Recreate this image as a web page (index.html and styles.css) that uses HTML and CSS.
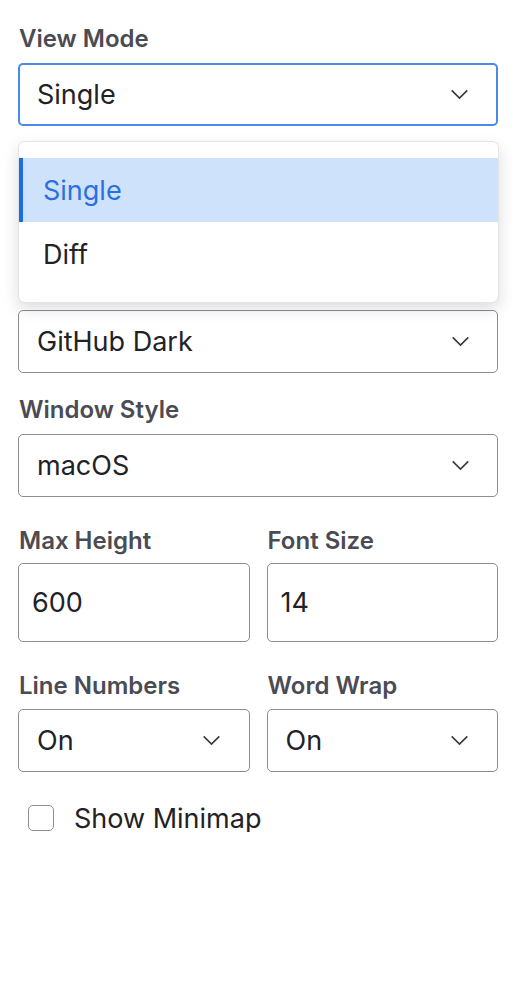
FILE: index.html
```html
<!DOCTYPE html>
<html lang="en">
<head>
  <meta charset="UTF-8">
  <title>Editor Settings</title>
  <link rel="stylesheet" href="styles.css">
</head>
<body>
  <div class="panel">
    <div class="field field-open">
      <div class="field-label">View Mode</div>
      <div class="select-wrap">
        <div class="select is-focused">
          <span>Single</span>
          <svg class="chevron" viewBox="0 0 20 12"><path d="M1.5 1.5 L10 10 L18.5 1.5"/></svg>
        </div>
        <ul class="menu">
          <li class="menu-item is-active">Single</li>
          <li class="menu-item">Diff</li>
        </ul>
      </div>
    </div>

    <div class="field">
      <div class="select">
        <span>GitHub Dark</span>
        <svg class="chevron" viewBox="0 0 20 12"><path d="M1.5 1.5 L10 10 L18.5 1.5"/></svg>
      </div>
    </div>

    <div class="field">
      <div class="field-label">Window Style</div>
      <div class="select">
        <span>macOS</span>
        <svg class="chevron" viewBox="0 0 20 12"><path d="M1.5 1.5 L10 10 L18.5 1.5"/></svg>
      </div>
    </div>

    <div class="field-row row-inputs">
      <div class="field">
        <div class="field-label">Max Height</div>
        <input class="text-input" type="text" value="600">
      </div>
      <div class="field">
        <div class="field-label">Font Size</div>
        <input class="text-input" type="text" value="14">
      </div>
    </div>

    <div class="field-row row-selects">
      <div class="field">
        <div class="field-label">Line Numbers</div>
        <div class="select">
          <span>On</span>
          <svg class="chevron" viewBox="0 0 20 12"><path d="M1.5 1.5 L10 10 L18.5 1.5"/></svg>
        </div>
      </div>
      <div class="field">
        <div class="field-label">Word Wrap</div>
        <div class="select">
          <span>On</span>
          <svg class="chevron" viewBox="0 0 20 12"><path d="M1.5 1.5 L10 10 L18.5 1.5"/></svg>
        </div>
      </div>
    </div>

    <label class="check">
      <span class="check-box"></span>
      <span class="check-text">Show Minimap</span>
    </label>
  </div>
</body>
</html>
```

FILE: styles.css
```css
body {
  margin: 0;
  background: #ffffff;
  font-family: Inter, "Noto Sans", sans-serif;
  color: #222226;
}

.panel {
  width: 480px;
  padding: 24px 0 0 18px;
}

.field {
  margin-bottom: 22px;
}

/* the open list sits over the space below the first select */
.field-open {
  margin-bottom: 184px;
}

.field-label {
  font-size: 24px;
  line-height: 29px;
  font-weight: 600;
  color: #4b4b53;
  margin-bottom: 10px;
  padding-left: 1px;
}

.select-wrap {
  position: relative;
}

.select {
  height: 63px;
  box-sizing: border-box;
  border: 1.5px solid #8c8c94;
  border-radius: 5px;
  padding: 0 27px 0 18px;
  display: flex;
  align-items: center;
  justify-content: space-between;
  font-size: 27px;
  background: #fff;
}

.select.is-focused {
  border: 2.5px solid #4a8be9;
  padding-left: 17px;
}

.chevron {
  width: 19px;
  height: 11px;
  fill: none;
  stroke: #3a3a40;
  stroke-width: 1.8;
}

.menu {
  position: absolute;
  top: calc(100% + 15px);
  left: 0;
  right: -1px;
  z-index: 10;
  margin: 0;
  padding: 16px 0;
  list-style: none;
  background: #fff;
  border: 1px solid #e4e4e6;
  border-radius: 7px;
  box-shadow: 0 6px 16px rgba(0, 0, 0, 0.14);
}

.menu-item {
  height: 64px;
  display: flex;
  align-items: center;
  padding-left: 24px;
  font-size: 27px;
  color: #222226;
}

.menu-item.is-active {
  background: #cfe2fc;
  color: #2a70e1;
  box-shadow: inset 4px 0 0 #1c6de0;
}

.field-row {
  display: grid;
  grid-template-columns: 1fr 1fr;
  gap: 17px;
}

.row-inputs {
  margin-top: 29px;
}

.row-inputs .field-label {
  margin-bottom: 8px;
}

.row-inputs .field {
  margin-bottom: 0;
}

.row-selects {
  margin-top: 29px;
}

.row-selects .field-label {
  margin-bottom: 9px;
}

.row-selects .field {
  margin-bottom: 0;
}

.row-selects .select {
  padding-right: 28px;
}

.text-input {
  display: block;
  width: 100%;
  height: 79px;
  box-sizing: border-box;
  border: 1.5px solid #8c8c94;
  border-radius: 5px;
  padding: 0 13px;
  font-family: inherit;
  font-size: 27px;
  color: #222226;
  background: #fff;
}

.check {
  display: flex;
  align-items: center;
  gap: 20px;
  margin-top: 31px;
  padding-left: 10px;
  font-size: 27px;
  line-height: 26px;
}

.check-text {
  padding-top: 3px;
}

.check-box {
  width: 26px;
  height: 26px;
  box-sizing: border-box;
  border: 1.5px solid #8c8c94;
  border-radius: 5px;
}
```
